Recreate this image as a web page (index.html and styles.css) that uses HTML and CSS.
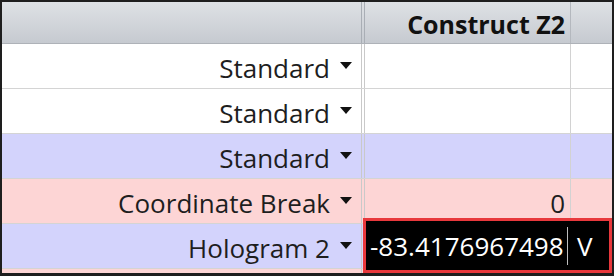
FILE: index.html
```html
<!DOCTYPE html>
<html lang="en">
  <head>
    <meta charset="UTF-8" />
    <title>Lens Data Editor</title>
    <link rel="stylesheet" href="styles.css">
  </head>
  <body>
    <div class="editor">
      <div class="row header">
        <div class="cell type"></div>
        <div class="cell value">Construct Z2</div>
        <div class="cell solve"></div>
      </div>
      <div class="row white">
        <div class="cell type">Standard <span class="arrow"></span></div>
        <div class="cell value"></div>
        <div class="cell solve"></div>
      </div>
      <div class="row white">
        <div class="cell type">Standard <span class="arrow"></span></div>
        <div class="cell value"></div>
        <div class="cell solve"></div>
      </div>
      <div class="row blue">
        <div class="cell type">Standard <span class="arrow"></span></div>
        <div class="cell value"></div>
        <div class="cell solve"></div>
      </div>
      <div class="row pink">
        <div class="cell type">Coordinate Break <span class="arrow"></span></div>
        <div class="cell value">0</div>
        <div class="cell solve"></div>
      </div>
      <div class="row blue">
        <div class="cell type">Hologram 2 <span class="arrow"></span></div>
        <div class="cell value"></div>
        <div class="cell solve"></div>
      </div>
      <div class="row pink tail">
        <div class="cell type"></div>
        <div class="cell value"></div>
        <div class="cell solve"></div>
      </div>
      <div class="edit-box">
        <span class="edit-num">-83.4176967498</span>
        <span class="edit-caret"></span>
        <span class="edit-solve">V</span>
      </div>
    </div>
  </body>
</html>
```

FILE: styles.css
```css
body {
  margin: 0;
  background-color: #fff;
}
.editor {
  position: relative;
  width: 610px;
  height: 271px;
  border: 2px solid #1e1e1e;
  border-bottom-width: 3px;
  overflow: hidden;
  font-family: "Open Sans", "Noto Sans", sans-serif;
  font-size: 26px;
  color: #1e1e1e;
}
.row {
  display: grid;
  grid-template-columns: 363px 206px 1fr;
  height: 45px;
  border-bottom: 1px solid #d4d4d4;
  box-sizing: border-box;
}
.cell {
  display: flex;
  align-items: center;
  justify-content: flex-end;
  box-sizing: border-box;
  padding-top: 3px;
}
.cell.type {
  border-right: 4px double #c9c9c9;
  padding-right: 9px;
}
.cell.value {
  border-right: 1px solid #d2d2d2;
  padding-right: 5px;
}
.header {
  height: 42px;
  font-size: 25px;
  background: linear-gradient(#dee1e5, #c6cad0);
  border-bottom: 1px solid #aeb2b8;
}
.header .cell.type {
  border-right-color: #a9aeb5;
}
.header .cell.value {
  border-right-color: #b4b8be;
  font-weight: bold;
  color: #111;
}
.white {
  background-color: #fff;
}
.blue {
  background-color: #d3d3fc;
}
.pink {
  background-color: #fdd5d5;
}
.arrow {
  display: inline-block;
  width: 0;
  height: 0;
  margin-left: 10px;
  margin-top: -4px;
  border-left: 6px solid transparent;
  border-right: 6px solid transparent;
  border-top: 7px solid #111;
}
.edit-box {
  position: absolute;
  left: 361px;
  top: 216px;
  width: 249px;
  height: 55px;
  box-sizing: border-box;
  border: 3px solid #e8383c;
  background-color: #000;
  color: #fff;
  display: flex;
  align-items: center;
  font-size: 26px;
  padding-left: 4px;
}
.edit-num {
  width: 197px;
}
.edit-caret {
  width: 1px;
  height: 38px;
  background-color: #bdbdbd;
}
.edit-solve {
  margin-left: 9px;
}
```
